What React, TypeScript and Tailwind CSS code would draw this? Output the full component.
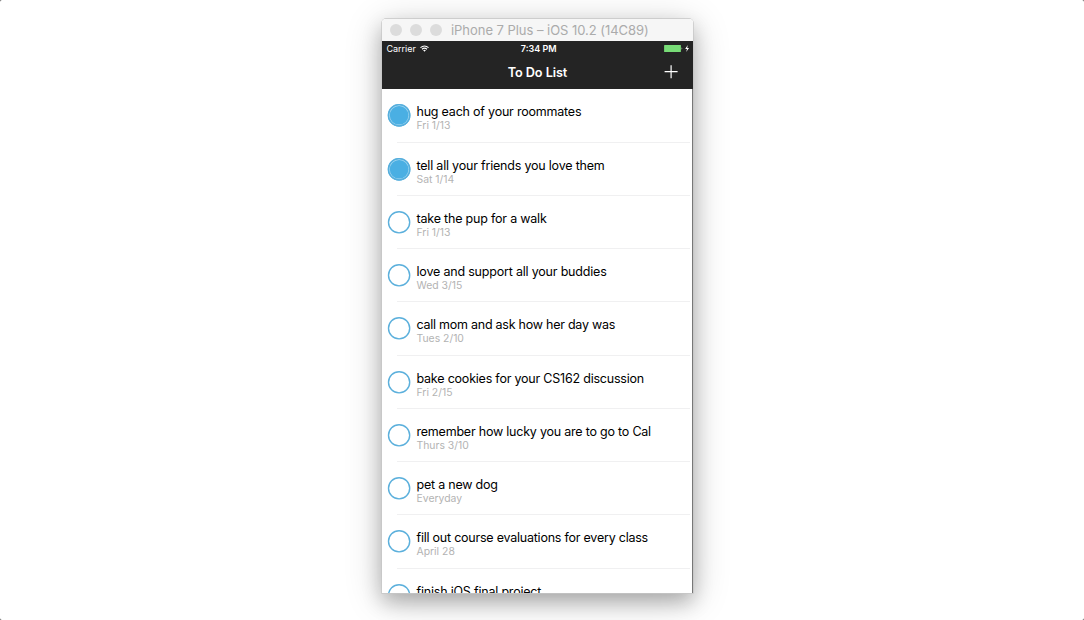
type Task = { title: string; due?: string; done?: boolean; tracking: string };

const tasks: Task[] = [
  { title: 'hug each of your roommates', due: 'Fri 1/13', done: true, tracking: 'tracking-[-0.21px]' },
  { title: 'tell all your friends you love them', due: 'Sat 1/14', done: true, tracking: 'tracking-[-0.2px]' },
  { title: 'take the pup for a walk', due: 'Fri 1/13', tracking: 'tracking-[-0.2px]' },
  { title: 'love and support all your buddies', due: 'Wed 3/15', tracking: 'tracking-[-0.195px]' },
  { title: 'call mom and ask how her day was', due: 'Tues 2/10', tracking: 'tracking-[-0.25px]' },
  { title: 'bake cookies for your CS162 discussion', due: 'Fri 2/15', tracking: 'tracking-[-0.21px]' },
  { title: 'remember how lucky you are to go to Cal', due: 'Thurs 3/10', tracking: 'tracking-[-0.215px]' },
  { title: 'pet a new dog', due: 'Everyday', tracking: 'tracking-[-0.22px]' },
  { title: 'fill out course evaluations for every class', due: 'April 28', tracking: 'tracking-[-0.23px]' },
  { title: 'finish iOS final project', tracking: 'tracking-[-0.2px]' },
];

function Check({ done }: { done?: boolean }) {
  return (
    <svg className="ml-[5px] mt-[14px] size-6 shrink-0" viewBox="0 0 24 24" fill="none">
      <circle cx="12.1" cy="12.3" r="10.6" stroke="#5cb0dc" strokeWidth="1.4" />
      {done && (
        <>
          <circle cx="12.1" cy="12.3" r="10.4" fill="#a5d8f2" />
          <circle cx="12.1" cy="12.3" r="10.7" stroke="#56afdd" strokeWidth="1.4" />
          <circle cx="12.1" cy="12.3" r="9.3" fill="#4aafe3" />
        </>
      )}
    </svg>
  );
}

function TaskRow({ task }: { task: Task }) {
  return (
    <li className="flex h-[53.25px] shrink-0">
      <Check done={task.done} />
      <div className="ml-[-14px] mr-[2px] flex-1 border-b border-[#f0f0f1] pl-[19.5px] pt-[15px]">
        <div className={`whitespace-nowrap text-[12.5px] leading-4 text-black ${task.tracking}`}>{task.title}</div>
        {task.due && (
          <div className="whitespace-nowrap text-[10.4px] leading-3 text-[#b3b3b3]">{task.due}</div>
        )}
      </div>
    </li>
  );
}

function TitleBar() {
  return (
    <div className="flex h-[22px] shrink-0 items-center bg-[#f6f6f6] pl-2">
      <div className="flex gap-2">
        <span className="size-3 rounded-full bg-[#dcdcdc]" />
        <span className="size-3 rounded-full bg-[#dcdcdc]" />
        <span className="size-3 rounded-full bg-[#dcdcdc]" />
      </div>
      <span className="ml-[9px] whitespace-nowrap text-[13px] leading-4 tracking-[-0.04px] text-[#ababab]">
        iPhone 7 Plus – iOS 10.2 (14C89)
      </span>
    </div>
  );
}

function NavHeader() {
  return (
    <header className="h-12 shrink-0 bg-[#242424] text-white">
      <div className="grid h-[15px] grid-cols-3 items-center pl-[4.5px] pr-[3px] text-[9px] leading-3">
        <div className="flex items-center gap-1">
          <span className="tracking-[-0.03px]">Carrier</span>
          <svg className="h-[7px] w-[9px]" viewBox="0 0 10 7" fill="none" stroke="white" strokeWidth="1.25">
            <path d="M.5 2.6Q5-1.2 9.5 2.6M2.2 4.3Q5 2 7.8 4.3" />
            <path d="M3.5 5.4Q5 4.2 6.5 5.4L5 7Z" fill="white" stroke="none" />
          </svg>
        </div>
        <span className="pl-px text-center font-semibold">7:34 PM</span>
        <svg className="h-[9px] w-[26px] justify-self-end" viewBox="0 0 26 9">
          <rect x=".1" y="1" width="16.8" height="7" rx=".5" fill="#78dc77" />
          <path d="M17.6 3.3q1.4 1.2 0 2.4z" fill="#b9ecb9" />
          <path d="M23.8 1 21.2 5h1.8L22.2 8 25 4h-1.8z" fill="white" />
        </svg>
      </div>
      <div className="grid h-8 grid-cols-3 items-center">
        <h1 className="col-start-2 whitespace-nowrap pt-0.5 text-center text-[12.7px] font-semibold leading-4 tracking-[-0.08px]">
          To Do List
        </h1>
        <button className="mr-[15px] justify-self-end" aria-label="Add task">
          <svg className="size-[14px]" viewBox="0 0 14 14" stroke="white" strokeWidth="1.2">
            <path d="M7.1 .2v13M.6 6.7h13" />
          </svg>
        </button>
      </div>
    </header>
  );
}

export default function App() {
  return (
    <div className="h-[620px] w-[1084px] bg-[#555]">
      <main className="flex h-full justify-center overflow-hidden rounded-[2px] bg-white pr-[9px] pt-[19px] font-[Inter,sans-serif]">
        <div className="flex h-[574px] w-[311px] flex-col rounded-t-[4px] shadow-[0_0_0_0.7px_#c6c6c6,0_9px_20px_rgba(0,0,0,0.24),0_6px_38px_rgba(0,0,0,0.20)]">
          <div className="flex min-h-0 flex-1 flex-col overflow-hidden rounded-t-[4px] bg-white">
            <TitleBar />
            <NavHeader />
            <ul className="flex min-h-0 flex-1 flex-col overflow-hidden border-r border-[#777] pt-[0.3px]">
              {tasks.map((task) => (
                <TaskRow key={task.title} task={task} />
              ))}
            </ul>
          </div>
        </div>
      </main>
    </div>
  );
}
